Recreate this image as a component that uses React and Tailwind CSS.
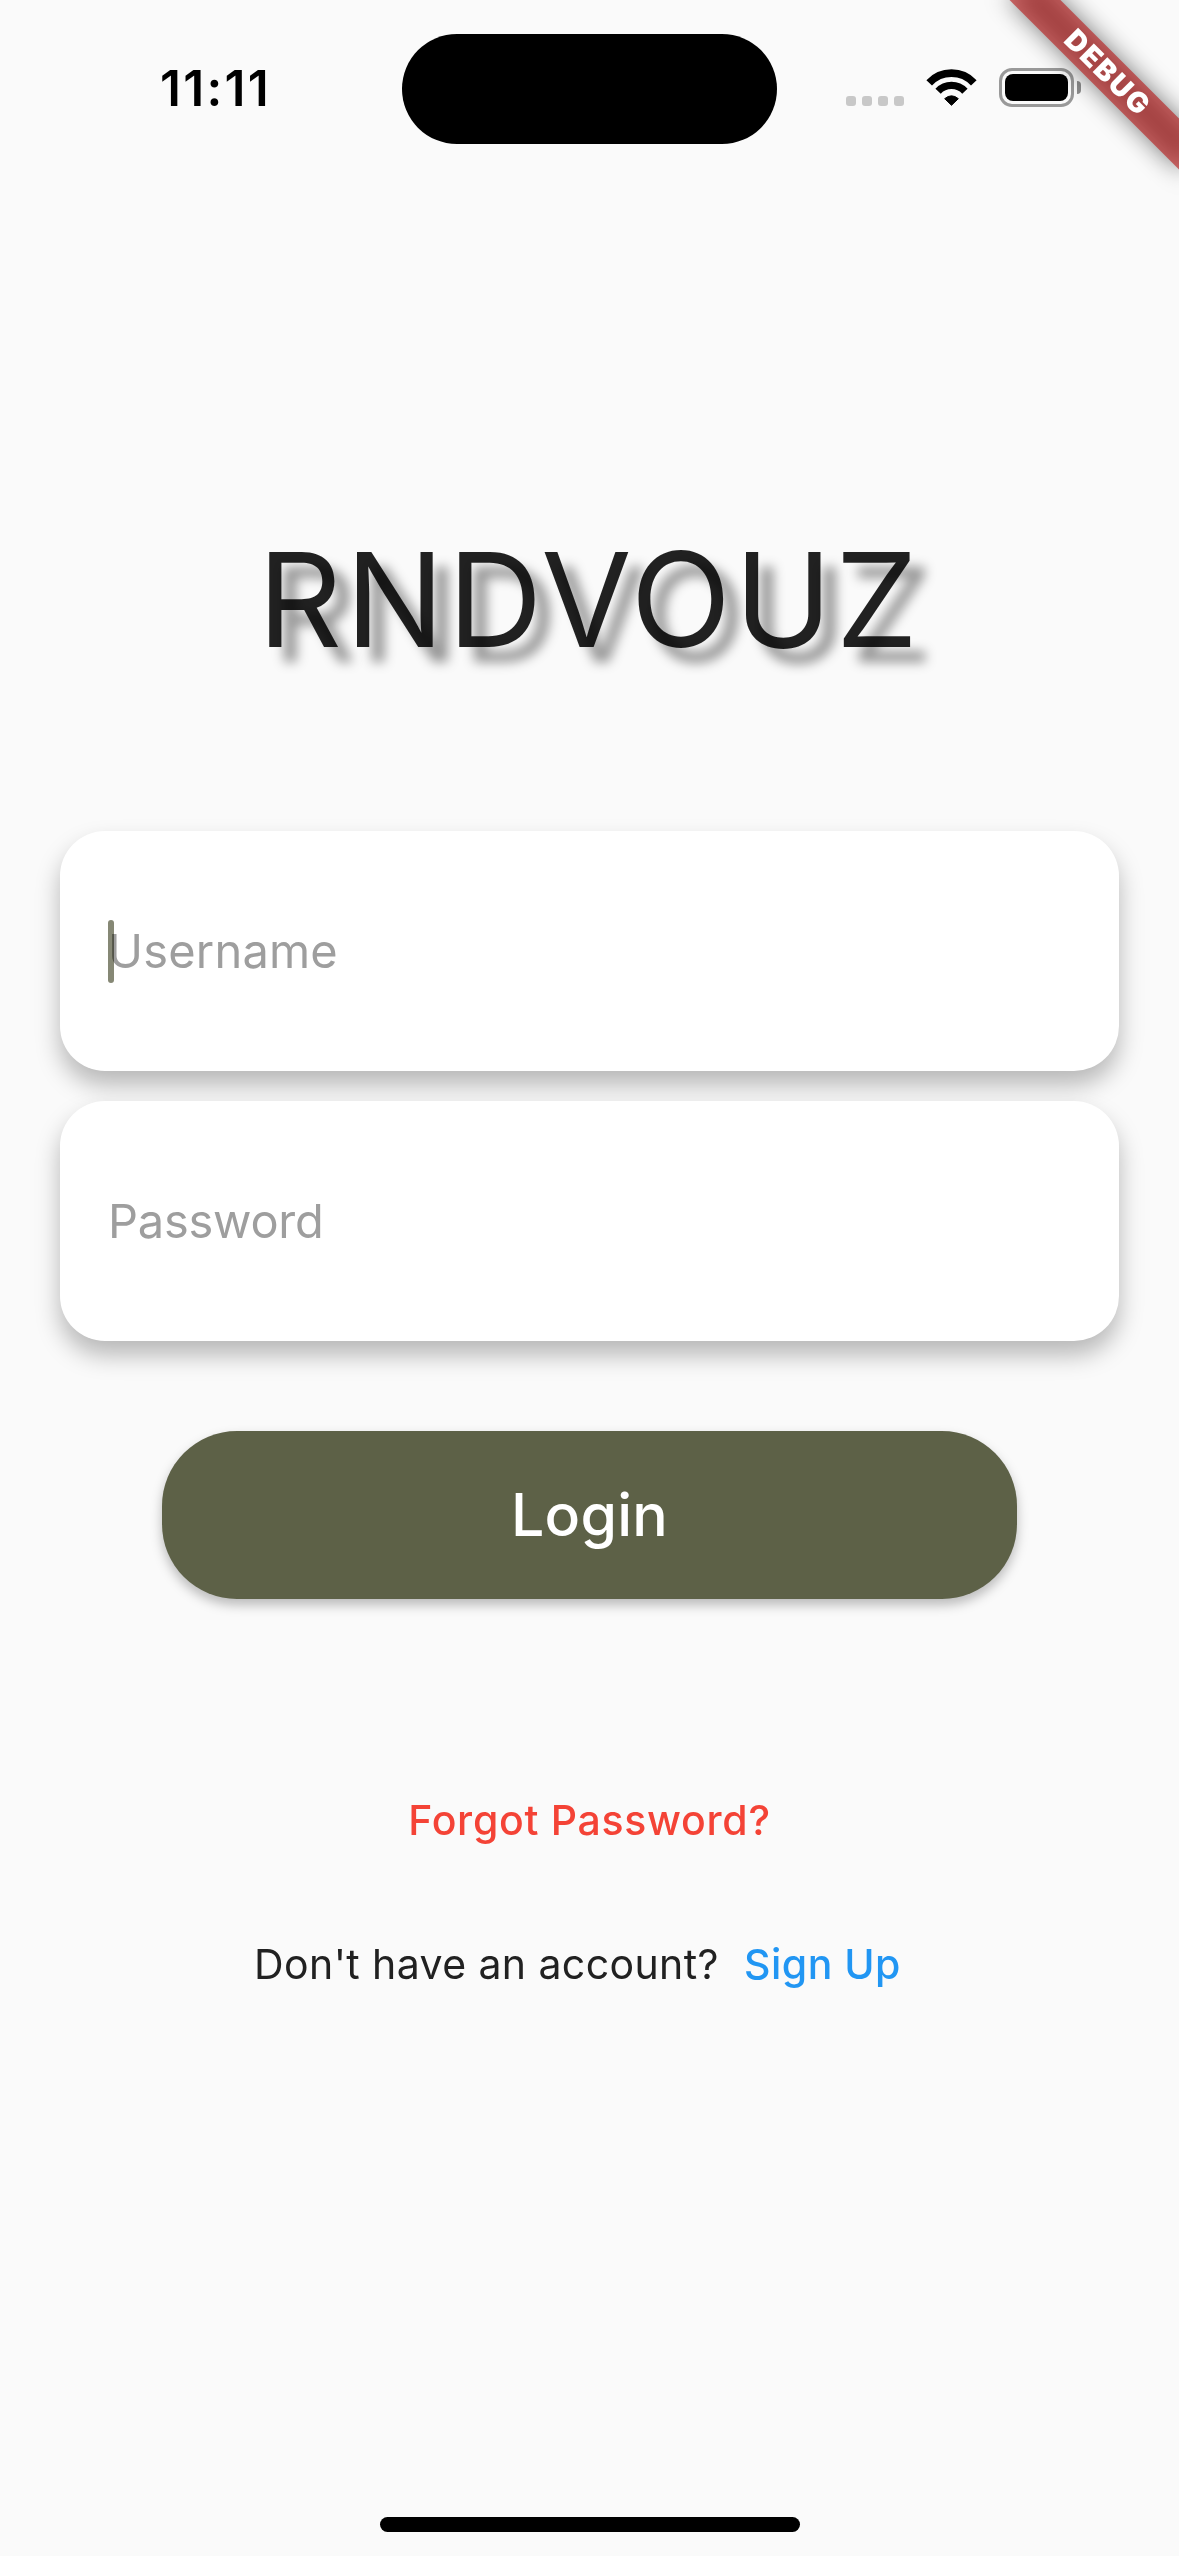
function Field({ label, active, spacing }) {
  return (
    <div className="flex h-[240px] w-[1059px] shrink-0 items-center rounded-[45px] bg-white pl-[48px] shadow-[0_14px_25px_rgba(0,0,0,0.27)]">
      {active && <span className="mr-[-6px] h-[63px] w-[6px] rounded-full bg-[#868875]" />}
      <span className={`text-[47px] text-[#9e9e9e] mix-blend-multiply ${spacing}`}>{label}</span>
    </div>
  );
}

function WifiIcon() {
  return (
    <svg className="mt-[69px] ml-[22px] h-[37px] w-[51px]" viewBox="0 0 151 111" fill="none" stroke="black">
      <path d="M8.600 41.600A91.500 91.500 0 0 1 142.400 41.600" strokeWidth="23" />
      <path d="M35.300 66.500A55 55 0 0 1 115.700 66.500" strokeWidth="22" />
      <path d="M75.500 109L55 89Q75.500 72 96 89Z" fill="black" strokeWidth="3" strokeLinejoin="round" />
    </svg>
  );
}

function Battery() {
  return (
    <div className="mt-[68px] ml-[22px] flex items-center">
      <div className="h-[39px] w-[75px] rounded-[13px] border-3 border-[#999] p-[3px]">
        <div className="size-full rounded-[8px] bg-black" />
      </div>
      <div className="ml-[3px] h-[13px] w-[4px] rounded-r-full bg-[#8c8c8c]" />
    </div>
  );
}

function DebugBanner() {
  return (
    <div className="absolute top-[54px] left-[987px] h-[36px] w-[240px] rotate-45">
      <div className="absolute inset-0 bg-black/50 blur-[12px]" />
      <div className="absolute inset-0 flex items-center justify-center bg-[#b71c1c]/63 pl-[2px] text-[28.5px] leading-none font-black tracking-[1.8px] text-white">
        DEBUG
      </div>
    </div>
  );
}

export default function App() {
  return (
    <div className="relative flex h-[2556px] w-[1179px] flex-col items-center overflow-hidden bg-[#fafafa] font-['Inter',sans-serif] whitespace-nowrap">
      <header className="flex h-[177px] w-full shrink-0 items-start">
        <span className="mt-[57px] ml-[160px] w-[242px] text-[49.5px] leading-[62px] font-semibold tracking-[2.3px]">11:11</span>
        <div className="mt-[34px] h-[110px] w-[375px] rounded-full bg-black" />
        <div className="mt-[96px] ml-[69px] flex gap-[6px]">
          {[0, 1, 2, 3].map((i) => (
            <span key={i} className="size-[10px] rounded-[3px] bg-[#c8c8c8]" />
          ))}
        </div>
        <WifiIcon />
        <Battery />
      </header>

      <h1 className="mt-[343px] h-[160px] text-[131px] leading-[160px] tracking-[3.5px] text-black/87 [text-shadow:15px_15px_12px_rgba(0,0,0,0.41)]">
        RNDVOUZ
      </h1>

      <main className="mt-[151px] flex flex-col items-center">
        <div className="flex flex-col gap-[30px]">
          <Field label="Username" active spacing="tracking-[0.2px]" />
          <Field label="Password" spacing="tracking-[-0.25px]" />
        </div>
        <button className="mt-[90px] h-[168px] w-[855px] rounded-[75px] bg-[#5d6147] text-[59px] font-medium tracking-[0.2px] text-white shadow-[0_6px_12px_rgba(0,0,0,0.26)]">
          Login
        </button>
        <a className="mt-[196px] text-[41px] leading-[50px] font-medium tracking-[0.7px] text-[#f44336]">Forgot Password?</a>
        <p className="mt-[94px] mr-[24px] flex text-[41px] leading-[50px] text-[#212121]">
          <span className="tracking-[0.4px]">Don't have an account?</span>
          <a className="ml-[25px] font-medium tracking-[0.5px] text-[#2196f3]">Sign Up</a>
        </p>
      </main>

      <div className="mt-auto mb-[24px] h-[15px] w-[420px] rounded-full bg-black" />
      <DebugBanner />
    </div>
  );
}
